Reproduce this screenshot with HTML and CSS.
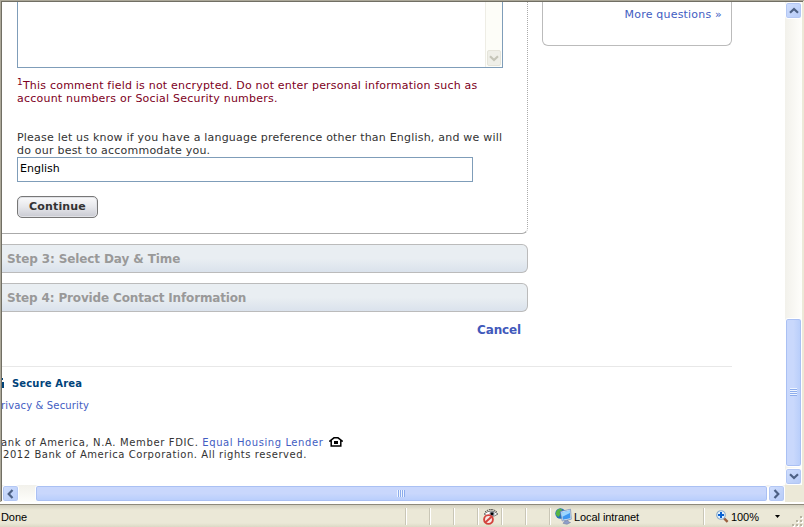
FILE: index.html
```html
<!DOCTYPE html>
<html lang="en">
<head>
<meta charset="utf-8">
<title>Schedule an appointment</title>
<link rel="stylesheet" href="styles.css">
</head>
<body>
<div class="window">
  <div class="frame">
    <main class="page">
      <div class="columns">
        <div class="steps">
          <section class="panel">
            <div class="comment">
              <div class="mini-scroll">
                <span class="mini-button"><svg width="10" height="7" viewBox="0 0 10 7"><path d="M1 1.3l4 3.8 4-3.8" fill="none" stroke="#c5c5b8" stroke-width="2.2"/></svg></span>
              </div>
            </div>
            <div class="notice">
              <div class="line n1"><span class="sup">1</span><span>This comment field is not encrypted. Do not enter personal information such as</span></div>
              <div class="line n2"><span>account numbers or Social Security numbers.</span></div>
            </div>
            <div class="language">
              <div class="line l1"><span>Please let us know if you have a language preference other than English, and we will</span></div>
              <div class="line l2"><span>do our best to accommodate you.</span></div>
            </div>
            <div class="field"><span>English</span></div>
            <div class="continue"><span>Continue</span></div>
          </section>
          <div class="step s3"><span>Step 3: Select Day &amp; Time</span></div>
          <div class="step s4"><span>Step 4: Provide Contact Information</span></div>
          <div class="cancel"><span>Cancel</span></div>
        </div>
        <aside class="questions"><span>More questions »</span></aside>
      </div>
      <footer class="footer">
        <div class="secure"><svg class="lock" width="2" height="10" viewBox="0 0 2 10"><path d="M0 4h2v6H0zM0 0h1v2H0z" fill="#00437a"/></svg><span>Secure Area</span></div>
        <div class="privacy"><span>rivacy &amp; Security</span></div>
        <div class="legal g1"><span class="member">ank of America, N.A. Member FDIC. </span><span class="link">Equal Housing Lender</span><svg class="house" width="14" height="10" viewBox="0 0 14 10"><path d="M5 .8h4L13 4H11.8V9H2.2V4H1z" fill="#fff" stroke="#000" stroke-width="1.5"/><path d="M5 4h4v3H5z"/></svg></div>
        <div class="legal g2"><span>2012 Bank of America Corporation. All rights reserved.</span></div>
      </footer>
    </main>
    <div class="vscroll">
      <span class="btn up"><svg width="10" height="7" viewBox="0 0 10 7"><path d="M1 5.7L5 1.9l4 3.8" fill="none" stroke="#4d6185" stroke-width="2.2"/></svg></span>
      <span class="vthumb"><i></i><i></i><i></i><i></i></span>
      <span class="btn down"><svg width="10" height="7" viewBox="0 0 10 7"><path d="M1 1.3l4 3.8 4-3.8" fill="none" stroke="#4d6185" stroke-width="2.2"/></svg></span>
    </div>
    <div class="hscroll">
      <span class="btn left"><svg width="7" height="10" viewBox="0 0 7 10"><path d="M5.5 1L1.7 5l3.8 4" fill="none" stroke="#4d6185" stroke-width="2.2"/></svg></span>
      <span class="hthumb"><i></i><i></i><i></i><i></i></span>
      <span class="btn right"><svg width="7" height="10" viewBox="0 0 7 10"><path d="M1.5 1l3.8 4-3.8 4" fill="none" stroke="#4d6185" stroke-width="2.2"/></svg></span>
    </div>
    <div class="corner"></div>
  </div>
  <div class="status">
    <div class="cell done"><span>Done</span></div>
    <div class="cell"></div>
    <div class="cell"></div>
    <div class="cell"></div>
    <div class="cell eye"><svg width="16" height="16" viewBox="0 0 16 16"><path d="M1 5Q8-1 15 5Q8 10 1 5z" fill="#fff" stroke="#555" stroke-width=".8"/><path d="M2 3Q8-2 14 3" fill="none" stroke="#333" stroke-width="1" stroke-dasharray="1.5 .8"/><circle cx="9" cy="4.8" r="2.5" fill="#7e8890"/><circle cx="9" cy="4.8" r="1.4"/><circle cx="5.5" cy="10.5" r="4.4" fill="#fbe9e6" stroke="#d3423c" stroke-width="1.9"/><path d="M2.5 13.3l6-5.6" stroke="#d3423c" stroke-width="1.9"/></svg></div>
    <div class="cell"></div>
    <div class="cell"></div>
    <div class="cell zone"><svg width="17" height="17" viewBox="0 0 17 17"><circle cx="5.5" cy="5.5" r="5.2" fill="#2370bd"/><path d="M.8 5Q1.500 1 5.500 .5l2 1.500-3 2 1 2-2 3-2.500-2z" fill="#58b545"/><path d="M5.500 3.500L15.500 1.200l.8 10L7.200 13z" fill="#e6edf5" stroke="#6b87b4" stroke-width=".7"/><path d="M6.500 4.500l8.300-1.900.6 7.700-7.500 1.500z" fill="#3e97f0"/><path d="M6.500 4.500l8.300-1.900.2 2.500-8.100 4z" fill="#9bd6ff"/><path d="M10 13l3-.6.5 1.400 2 .7-3.500 1.800-4-1z" fill="#8f9fcb" stroke="#66759b" stroke-width=".5"/></svg><span>Local intranet</span></div>
    <div class="cell magnify"><svg width="13" height="13" viewBox="0 0 13 13"><path d="M7.6 7.8l4 4" stroke="#9b5e3d" stroke-width="2.4"/><circle cx="5" cy="5" r="4.3" fill="#e3f2ff" stroke="#8cabc8" stroke-width="1.1"/><path d="M5 2v6M2 5h6" stroke="#0962d1" stroke-width="2"/></svg><span>100%</span><svg class="caret" width="5" height="3" viewBox="0 0 5 3"><path d="M0 0h5L2.5 3z"/></svg></div>
    <svg class="grip" width="11" height="11" viewBox="0 0 11 11"><g fill="#fff"><path d="M9 1h2v2H9zM9 5h2v2H9zM9 9h2v2H9zM5 5h2v2H5zM5 9h2v2H5zM1 9h2v2H1z"/></g><g fill="#b8b4a2"><path d="M8 0h2v2H8zM8 4h2v2H8zM8 8h2v2H8zM4 4h2v2H4zM4 8h2v2H4zM0 8h2v2H0z"/></g></svg>
  </div>
</div>
</body>
</html>
```

FILE: styles.css
```css
* { box-sizing: border-box; }
body { margin: 0; background: #ece9d8; font-family: "DejaVu Sans", Verdana, sans-serif; font-size: 11px; color: #333; overflow: hidden; }
span { white-space: nowrap; }
svg { display: block; flex: none; }

.window { width: 804px; height: 527px; display: flex; flex-direction: column; }
.frame {
  height: 505px; display: grid; grid-template-columns: 783px 17px; grid-template-rows: 483px 17px;
  padding: 2px 2px 3px;
  background: linear-gradient(#716f64, #716f64) 1px 1px / 802px 1px no-repeat,
    linear-gradient(#716f64, #716f64) 1px 1px / 1px 500px no-repeat,
    linear-gradient(#aca899, #aca899) 0 0 / 804px 1px no-repeat,
    linear-gradient(#aca899, #aca899) 0 0 / 1px 502px no-repeat,
    linear-gradient(#fff, #fff) 0 502px / 804px 2px no-repeat,
    linear-gradient(#8d897b, #8d897b) 0 504px / 804px 1px no-repeat, #ece9d8;
}
.page { background: #fff; overflow: hidden; }
.columns { display: flex; height: 364px; }
.steps { width: 526px; margin-right: 14px; }

.panel { height: 232px; padding-left: 15px; border-right: 1px dotted #aaa; border-bottom: 1px solid #aaa; border-bottom-right-radius: 6px; }
.comment { width: 486px; height: 66px; border: 1px solid #7f9db9; border-top: 0; display: flex; justify-content: flex-end; }
.mini-scroll { width: 17px; background: #fdfdf8; border-left: 1px solid #eeede5; display: flex; align-items: flex-end; padding: 0 1px 1px; }
.mini-button { width: 14px; height: 16px; border: 1px solid #e5e4da; border-radius: 2px; background: #efefe8; display: flex; align-items: center; justify-content: center; }
.line { height: 13px; line-height: 13px; letter-spacing: .207px; }
.notice { padding-top: 11px; color: #7d0022; }
.n2, .l2 { letter-spacing: .22px; }
.sup { font-size: 9px; position: relative; top: -4px; line-height: 1px; }
.language { padding-top: 26px; }
.field { width: 456px; height: 25px; padding: 4px 2px; line-height: 13px; border: 1px solid #7f9db9; color: #000; }
.continue { width: 81px; height: 22px; margin-top: 14px; padding-bottom: 1px; display: flex; align-items: center; justify-content: center; border: 1px solid #777; border-radius: 5px; background: linear-gradient(#fafafb, #e6e7eb 50%, #c9cad2); box-shadow: inset 0 0 0 1px #e1e2e6; font-weight: bold; font-size: 11px; letter-spacing: .15px; }

.step { height: 29px; margin-top: 10px; padding-left: 5px; line-height: 28px; border: 1px solid #bbb; border-left: 0; border-radius: 0 6px 6px 0; background: linear-gradient(#e9eef2 50%, #dae2ec); color: #999; font-size: 12px; font-weight: bold; }
.s3 { letter-spacing: -.11px; }
.s4 { letter-spacing: -.15px; }
.cancel { padding: 10px 7px 0 0; text-align: right; line-height: 16px; font-size: 12px; font-weight: bold; color: #4159bb; letter-spacing: -.15px; }

.questions { width: 190px; height: 44px; border: 1px solid #bbb; border-top: 0; border-radius: 0 0 6px 6px; padding: 6px 9px 0 0; text-align: right; line-height: 14px; color: #425dc2; letter-spacing: .2px; }

.footer { width: 730px; border-top: 1px solid #e8e8e8; font-size: 10px; }
.secure { display: flex; align-items: center; height: 12px; margin-top: 10px; gap: 8px; font-weight: bold; color: #00437a; letter-spacing: .15px; }
.privacy { margin-top: 11px; margin-left: -1px; height: 12px; line-height: 12px; color: #425dc2; letter-spacing: .15px; }
.legal { height: 12px; line-height: 12px; display: flex; align-items: center; letter-spacing: .55px; }
.legal span { white-space: pre; }
.g1 { margin-top: 25px; margin-left: -1px; }
.member { letter-spacing: .64px; }
.g2 { padding-left: 1px; }
.link { color: #425dc2; letter-spacing: .58px; }
.house { margin: 0 0 2px 6px; }

.vscroll { background: linear-gradient(90deg, #f2f1eb, #fefefb); display: flex; flex-direction: column; }
.hscroll { background: linear-gradient(#f2f1eb, #fefefb); display: flex; }
.corner { background: #ece9d8; }
.btn { width: 17px; height: 17px; flex: none; display: flex; align-items: center; justify-content: center; border: 1px solid #fff; border-radius: 3px; box-shadow: inset 0 0 0 1px #b3c7f4; background: linear-gradient(135deg, #d0defd, #b6cbf8); }
.vthumb, .hthumb { display: flex; align-items: center; justify-content: center; border: 1px solid #fff; border-radius: 3px; box-shadow: inset 0 0 0 1px #aac0f3; }
.vthumb { height: 149px; margin: 299px 0 1px; flex-direction: column; gap: 1px; background: linear-gradient(90deg, #c9d8fc 50%, #b7cdfa); }
.hthumb { width: 733px; margin-left: 16px; gap: 1px; background: linear-gradient(#c9d7fc 50%, #b7cdfc); }
.vthumb i { width: 7px; height: 1px; background: #8cacec; box-shadow: 0 -1px #eef4ff; }
.hthumb i { width: 1px; height: 7px; background: #8cacec; box-shadow: -1px 0 #eef4ff; }

.status { height: 22px; display: flex; background: linear-gradient(#d2cfbf, #ebe8d7 5px, #ebe8d7 18px, #dcd9c5); position: relative; font-family: "Liberation Sans", sans-serif; color: #000; padding-top: 3px; letter-spacing: -.07px; }
.cell { width: 24px; height: 17px; display: flex; align-items: center; border-right: 1px solid #fff; box-shadow: inset -1px 0 #c9c6b6; }
.done { width: 407px; padding-left: 1px; }
.eye { padding-left: 4px; }
.zone { width: 154px; gap: 2px; padding-left: 4px; }
.magnify { width: 99px; border: 0; box-shadow: none; padding-left: 11px; gap: 2px; }
.caret { margin-left: 14px; }
.grip { position: absolute; right: 1px; bottom: 0; }
```
